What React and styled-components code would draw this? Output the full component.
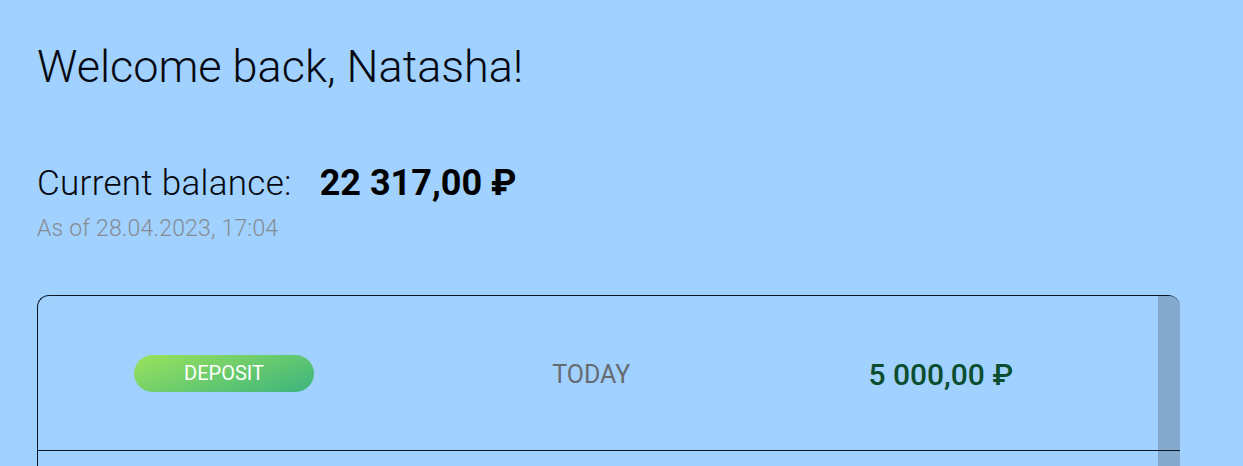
import React from "react";
import styled, { createGlobalStyle } from "styled-components";

const GlobalStyle = createGlobalStyle`
  html, body {
    margin: 0;
    padding: 0;
    overflow: hidden;
    background: #a1d1fe;
  }
  body {
    font-family: Roboto, "Liberation Sans", sans-serif;
  }
`;

const Page = styled.div`
  min-height: 466px;
  padding: 40px 0 0 37px;
  box-sizing: border-box;
  background: #a1d1fe;
`;

const Greeting = styled.h1`
  margin: 0;
  font-size: 45px;
  line-height: 54px;
  font-weight: 300;
  color: #050810;
`;

const BalanceRow = styled.div`
  display: flex;
  align-items: baseline;
  gap: 28px;
  margin-top: 69px;
  height: 40px;
`;

const BalanceLabel = styled.span`
  font-size: 35px;
  line-height: 40px;
  font-weight: 300;
  letter-spacing: 0.3px;
  color: #050810;
`;

const BalanceValue = styled.span`
  font-size: 36px;
  line-height: 40px;
  font-weight: 700;
  color: #000;
`;

const Timestamp = styled.div`
  margin-top: 13px;
  font-size: 23px;
  line-height: 26px;
  font-weight: 300;
  letter-spacing: 0.2px;
  color: #858b91;
`;

const Card = styled.div`
  position: relative;
  margin-top: 53px;
  width: 1142px;
  height: 300px;
  border: 1px solid #08182a;
  border-right: none;
  border-radius: 12px;
  overflow: hidden;
`;

const ScrollTrack = styled.div`
  position: absolute;
  top: 0;
  right: 0;
  bottom: 0;
  width: 22px;
  background: #85a9cc;
`;

const Row = styled.div`
  position: relative;
  z-index: 1;
  display: flex;
  align-items: center;
  justify-content: space-between;
  height: 155px;
  padding: 2px 167px 0 96px;
  box-sizing: border-box;
  border-bottom: 1px solid #08182a;
`;

const Badge = styled.span`
  display: flex;
  align-items: center;
  justify-content: center;
  width: 180px;
  height: 37px;
  margin-top: -2px;
  border-radius: 19px;
  background: linear-gradient(160deg, #9be35c 0%, #3bb47e 100%);
  color: #fff;
  font-size: 20px;
  font-weight: 400;
  text-transform: uppercase;
`;

const DateCell = styled.span`
  font-size: 25px;
  font-weight: 400;
  color: #666b72;
  text-transform: uppercase;
`;

const Amount = styled.span`
  font-size: 30px;
  font-weight: 500;
  color: ${(p) => (p.$positive ? "#0b4d2f" : "#7a1d1d")};
`;

const transactions = [
  { type: "Deposit", date: "Today", amount: "5 000,00 ₽", positive: true },
];

export default function App() {
  return (
    <>
      <GlobalStyle />
      <Page>
        <Greeting>Welcome back, Natasha!</Greeting>
        <BalanceRow>
          <BalanceLabel>Current balance:</BalanceLabel>
          <BalanceValue>22 317,00 ₽</BalanceValue>
        </BalanceRow>
        <Timestamp>As of 28.04.2023, 17:04</Timestamp>
        <Card>
          <ScrollTrack />
          {transactions.map((t, i) => (
            <Row key={i}>
              <Badge>{t.type}</Badge>
              <DateCell>{t.date}</DateCell>
              <Amount $positive={t.positive}>{t.amount}</Amount>
            </Row>
          ))}
        </Card>
      </Page>
    </>
  );
}
